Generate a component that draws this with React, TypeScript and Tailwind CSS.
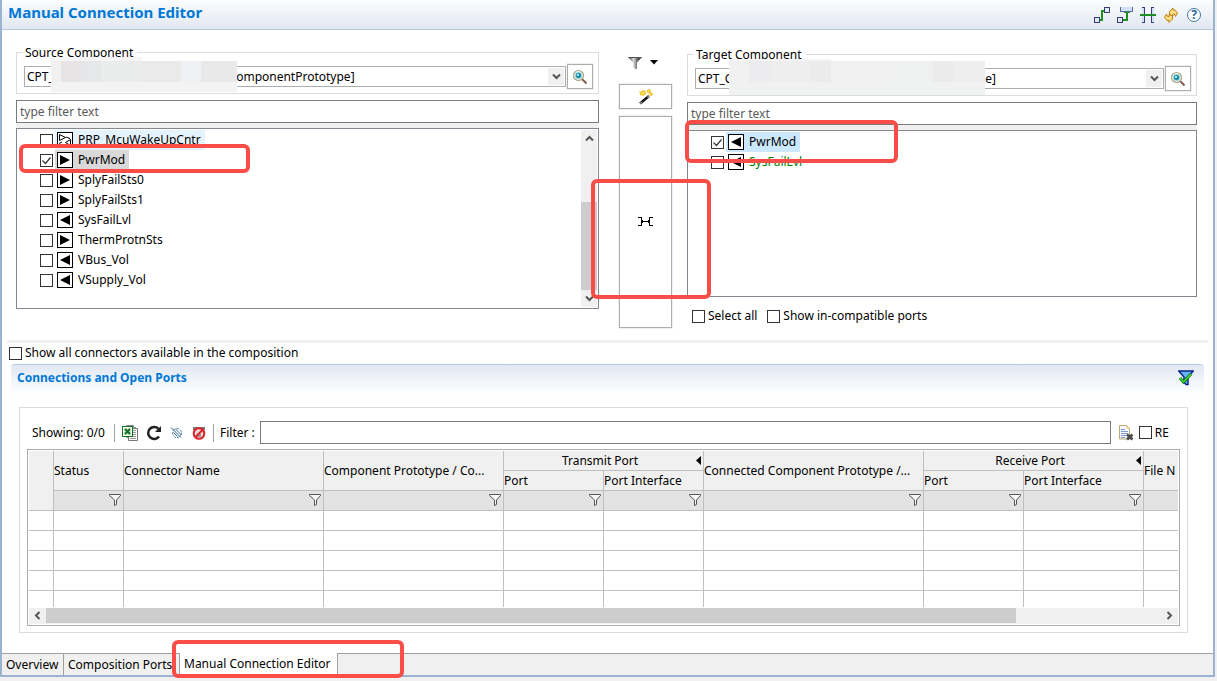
import { useState } from 'react'
import type { ReactNode } from 'react'

type Direction = 'in' | 'out' | 'both'

type Port = {
  name: string
  direction: Direction
  checked?: boolean
  highlight?: string
  color?: string
}

const sourcePorts: Port[] = [
  { name: 'PRP_McuWakeUpCntr', direction: 'both', highlight: 'bg-[#e5f3ff]' },
  { name: 'PwrMod', direction: 'out', checked: true, highlight: 'bg-[#d9d9d9]' },
  { name: 'SplyFailSts0', direction: 'out' },
  { name: 'SplyFailSts1', direction: 'out' },
  { name: 'SysFailLvl', direction: 'in' },
  { name: 'ThermProtnSts', direction: 'out' },
  { name: 'VBus_Vol', direction: 'in' },
  { name: 'VSupply_Vol', direction: 'in' },
]

const targetPorts: Port[] = [
  { name: 'PwrMod', direction: 'in', checked: true, highlight: 'bg-[#cce8ff]' },
  { name: 'SysFailLvl', direction: 'in', color: 'text-[#008000]' },
]

const tabs = [
  { name: 'Overview', width: 'min-w-[62px]' },
  { name: 'Composition Ports', width: 'min-w-[116px]' },
  { name: 'Manual Connection Editor', width: 'min-w-[158px]' },
]

const filterColumns = [
  'Status',
  'Connector Name',
  'Component Prototype',
  'Transmit Port',
  'Transmit Port Interface',
  'Connected Component Prototype',
  'Receive Port',
  'Receive Port Interface',
]

function PortIcon({ direction }: { direction: Direction }) {
  return (
    <svg width="16" height="16" viewBox="0 0 16 16" className="shrink-0">
      <rect x="0.5" y="0.5" width="15" height="15" fill="#fff" stroke="#000" />
      {direction === 'out' && <path d="M3 3v10l10-5z" />}
      {direction === 'in' && <path d="M13 3v10L3 8z" />}
      {direction === 'both' && (
        <g fill="none" stroke="#000">
          <path d="M2.5 2.5v6l6-3zM13.5 7.500v6l-5-3z" />
          <path d="M2 11.500l3-1.500M9 5l4 1.500M5 12.500h3" />
        </g>
      )}
    </svg>
  )
}

function LinkIcon() {
  return (
    <svg width="16" height="16" viewBox="0 0 16 16" shapeRendering="crispEdges">
      <path d="M6 13h2V4h3" fill="none" stroke="#1f8f1f" strokeWidth="2" />
      <rect x="10.500" y="0.500" width="5" height="5" fill="#dce9f7" stroke="#3b3b78" />
      <rect x="0.500" y="10.500" width="5" height="5" fill="#dce9f7" stroke="#3b3b78" />
    </svg>
  )
}

function DelegateIcon() {
  return (
    <svg width="16" height="16" viewBox="0 0 16 16" shapeRendering="crispEdges">
      <path d="M3.500 0v4.500h12V0" fill="#cfe2f7" stroke="#5a6590" />
      <path d="M6 13h4V5" fill="none" stroke="#1f8f1f" strokeWidth="2" />
      <path d="M7 5.500h6" stroke="#1f8f1f" />
      <rect x="0.500" y="10.500" width="5" height="5" fill="#dce9f7" stroke="#3b3b78" />
    </svg>
  )
}

function PassThroughIcon() {
  return (
    <svg width="16" height="16" viewBox="0 0 16 16" shapeRendering="crispEdges">
      <path d="M2 1h3v14H2zM11 1h3v14h-3z" fill="#cfe2f7" />
      <path d="M2 .5h2.500v15H2M14 .5h-2.500v15H14" fill="none" stroke="#3b3b78" />
      <path d="M0 8h16" stroke="#1f8f1f" strokeWidth="2" />
    </svg>
  )
}

function RefreshIcon() {
  return (
    <svg width="16" height="16" viewBox="0 0 16 16">
      <g fill="#ffdf80" stroke="#bd7f14">
        <path d="M6.500 7.500V4.500L10 1v2h2l2.500 3-2 3.500-1-2.500H10v2z" />
        <path d="M9.500 9v3L6 15.500v-2H4l-2.500-3L3.500 7l1 2.500H6v-2z" />
      </g>
    </svg>
  )
}

function HelpIcon() {
  return (
    <svg width="16" height="16" viewBox="0 0 16 16">
      <circle cx="8" cy="8" r="6.500" fill="#fff" stroke="#3a78a8" />
      <text
        x="8"
        y="12"
        textAnchor="middle"
        fill="#2c6697"
        className="font-['Noto_Sans',sans-serif] text-[12px] font-bold"
      >
        ?
      </text>
    </svg>
  )
}

function FunnelIcon() {
  return (
    <svg width="14" height="12" viewBox="0 0 14 12">
      <defs>
        <linearGradient id="funnel" x1="0" x2="1">
          <stop offset="0" stopColor="#222" />
          <stop offset="0.400" stopColor="#ddd" />
          <stop offset="0.700" stopColor="#555" />
          <stop offset="1" stopColor="#222" />
        </linearGradient>
      </defs>
      <path d="M0 0h14L9 5.500V12H7L5 10V5.500z" fill="url(#funnel)" />
      <path d="M.5.500h13" stroke="#555" />
    </svg>
  )
}

function ColumnFilterIcon() {
  return (
    <svg width="12" height="12" viewBox="0 0 12 12">
      <path d="M.5.500h11v1L7.500 6v4.500l-2 1V6l-5-4.500z" fill="#f6f6f6" stroke="#555" />
    </svg>
  )
}

function WandIcon() {
  return (
    <svg width="16" height="16" viewBox="0 0 16 16">
      <path d="M2 14.500 11 7" stroke="#111" strokeWidth="2.500" />
      <path d="M2 14.500 4 13M9.500 8.500 11 7" stroke="#999" strokeWidth="1.500" />
      <g fill="#ffd83d" stroke="#d9a400" strokeWidth="0.500">
        <path d="m5 1 1 1.500L7.500 2l-.5 1.500L8 5l-1.500.5L5 7 4 5.500 2 6l.5-1.500-1-1.500L3.500 3z" />
        <path d="M9 1.500 11.500 0l1 2-1 2-2-.5z" />
        <circle cx="13" cy="5" r="1.500" />
      </g>
    </svg>
  )
}

function SearchIcon() {
  return (
    <svg width="16" height="16" viewBox="0 0 16 16">
      <path d="m10 10 4.500 4.500" stroke="#855b50" strokeWidth="2" />
      <circle cx="6.500" cy="6.500" r="5" fill="#f3f6ee" stroke="#a9a586" strokeWidth="1.200" />
      <circle cx="6.500" cy="6.500" r="3.200" fill="#57bcd3" />
      <circle cx="6.500" cy="6.500" r="2.200" fill="#107c9c" />
      <path d="M5 5h2v2H5z" fill="#a9ecf7" />
    </svg>
  )
}

function ConnectIcon() {
  return (
    <svg width="16" height="10" viewBox="0 0 16 10" shapeRendering="crispEdges">
      <path
        d="M0 .5h3.500v8H0M15 .5h-3.500v8H15M4 4.500h7M4.500 3v3M10.500 3v3"
        fill="none"
        stroke="#000"
      />
    </svg>
  )
}

function ActiveFilterIcon() {
  return (
    <svg width="16" height="16" viewBox="0 0 16 16">
      <path d="M.8 1h14.400L10 7v7.500H8L6 12V7z" fill="#62b4f5" stroke="#0a1f8f" strokeWidth="1.400" />
      <path d="m2 8 3.500 4L13 4" fill="none" stroke="#0b6b0b" strokeWidth="3" />
      <path d="m2 8 3.500 4L13 4" fill="none" stroke="#4be03c" strokeWidth="1.500" />
    </svg>
  )
}

function ExcelIcon() {
  return (
    <svg width="16" height="16" viewBox="0 0 16 16">
      <path d="M4.500.500h7v2h2v10h-9z" fill="#fff" stroke="#888" />
      <path d="M6.500 3.500h9v12h-9z" fill="#fff" stroke="#777" />
      <path d="M11 5.500h3M11 7.500h3M11 9.500h3M8 11.500h6M8 13.500h6" stroke="#999" />
      <rect x="0.500" y="1.500" width="10" height="10" fill="#fff" stroke="#12731d" />
      <path d="M2 3h7v7H2z" fill="#d5ead6" />
      <path d="m3 4 5 5M8 4 3 9" stroke="#12731d" strokeWidth="2" />
    </svg>
  )
}

function ReloadIcon() {
  return (
    <svg width="16" height="16" viewBox="0 0 16 16">
      <path d="M12.500 3.800A6 6 0 1 0 13 11.500" fill="none" stroke="#222" strokeWidth="2.500" />
      <path d="M15 1v6H9z" fill="#222" />
    </svg>
  )
}

function StripedIcon() {
  return (
    <svg width="14" height="14" viewBox="0 0 14 14">
      <circle cx="7" cy="7" r="4.500" fill="#fff" stroke="#5f93ba" strokeDasharray="3 1" />
      <path d="m1 1.500 10 10M5.500 3l6 6M3.500 6.500l4 4" stroke="#2f6089" />
    </svg>
  )
}

function BlockedIcon() {
  return (
    <svg width="14" height="14" viewBox="0 0 14 14">
      <path d="M1 1h12v3H1z" fill="#777" />
      <circle cx="7" cy="7.500" r="5.300" fill="#e9dada" stroke="#e01f26" strokeWidth="2" />
      <path d="M5 8h4v3H5z" fill="#999" />
      <path d="m3.500 11 7-7" stroke="#e01f26" strokeWidth="2" />
    </svg>
  )
}

function ClearIcon() {
  return (
    <svg width="16" height="16" viewBox="0 0 16 16">
      <path d="M1.500.500h7l3 3v10.500h-10z" fill="#f5f8fc" stroke="#b9a76b" />
      <path d="M8.500.500v3h3z" fill="#e2c878" />
      <path d="M3 4.500h4M3 6.500h7M3 8.500h7M3 10.500h5M3 12.500h4" stroke="#7f9bc6" />
      <path d="m9 9.500 5.500 5M14.500 9.500 9 14.500" stroke="#4d4d4d" strokeWidth="2.800" />
    </svg>
  )
}

type ChevronProps = { direction: 'up' | 'down' | 'left' | 'right' }

function Chevron({ direction }: ChevronProps) {
  const paths = {
    up: 'M1 6.500 4.500 3 8 6.500',
    down: 'M1 2.500 4.500 6 8 2.500',
    left: 'M6.500 1 3 4.500 6.500 8',
    right: 'M2.500 1 6 4.500 2.500 8',
  }
  return (
    <svg width="9" height="9" viewBox="0 0 9 9">
      <path d={paths[direction]} fill="none" stroke="#555" strokeWidth="2" />
    </svg>
  )
}

type CheckboxProps = { label: ReactNode; defaultChecked?: boolean; className?: string }

function Checkbox({ label, defaultChecked, className = 'gap-[3px]' }: CheckboxProps) {
  return (
    <label className={`flex items-center ${className}`}>
      <span className="relative size-[13px] shrink-0">
        <input
          type="checkbox"
          defaultChecked={defaultChecked}
          className="peer block size-[13px] appearance-none border border-[#333] bg-white"
        />
        <svg
          width="13"
          height="13"
          viewBox="0 0 13 13"
          className="pointer-events-none absolute inset-0 hidden peer-checked:block"
        >
          <path d="m2.500 6.500 3 3 5-6" fill="none" stroke="#333" strokeWidth="1.200" />
        </svg>
      </span>
      {label}
    </label>
  )
}

function PortRow({ port }: { port: Port }) {
  return (
    <li className="flex h-5 pl-[22px]">
      <Checkbox
        defaultChecked={port.checked}
        className="gap-[2px]"
        label={
          <span
            className={`flex h-5 items-center gap-[5px] pr-1 pl-[2px] ${port.highlight ?? ''} ${port.color ?? ''}`}
          >
            <PortIcon direction={port.direction} />
            {port.name}
          </span>
        }
      />
    </li>
  )
}

type ComponentGroupProps = { label: string; value: string; children: ReactNode }

function ComponentGroup({ label, value, children }: ComponentGroupProps) {
  return (
    <div className="relative h-[42px] border border-[#dcdcdc] pt-[11px] pr-[5px] pl-[7px]">
      <span className="absolute -top-2 left-[6px] bg-white pr-1 pl-[2px] leading-4">{label}</span>
      <div className="flex gap-px">
        <div className="relative mt-[2px] h-[21px] flex-1">
          <select
            aria-label={label}
            className="h-[21px] w-full appearance-none border border-[#abadb3] bg-white pl-[2px]"
          >
            <option>{value}</option>
          </select>
          <span className="pointer-events-none absolute inset-y-[2px] right-[2px] flex w-4 items-center justify-center bg-[#f0f0f0]">
            <Chevron direction="down" />
          </span>
        </div>
        <button
          aria-label={`Search ${label}`}
          className="flex h-[25px] w-[26px] items-center justify-center border border-[#adadad] bg-white outline outline-[#f0f0f0]"
        >
          <SearchIcon />
        </button>
      </div>
      {children}
    </div>
  )
}

function FilterInput({ label }: { label: string }) {
  return (
    <input
      type="text"
      aria-label={label}
      placeholder="type filter text"
      className="mt-[6px] h-[23px] w-full border border-[#7a7a7a] bg-white px-[3px] placeholder-[#5a5a5a] outline-none"
    />
  )
}

function Marker({ className }: { className: string }) {
  return (
    <div
      className={`pointer-events-none absolute z-10 rounded-md border-4 border-[#fb4d47] ${className}`}
    />
  )
}

function GroupHead({ label }: { label: string }) {
  return (
    <span className="flex items-center">
      <span className="flex-1 text-center">{label}</span>
      <svg width="5" height="9" viewBox="0 0 5 9" className="mr-[2px]">
        <path d="M5 0v9L0 4.500z" />
      </svg>
    </span>
  )
}

function ConnectionsTable() {
  const head = 'border-r border-b border-[#bfbfbf] p-0 text-left font-normal truncate'
  return (
    <div className="border border-[#acacac] bg-white p-px">
      <div className="overflow-hidden">
        <table className="w-full table-fixed border-separate border-spacing-0 bg-white">
          <colgroup>
            <col className="w-[25px]" />
            <col className="w-[70px]" />
            <col className="w-[200px]" />
            <col className="w-[180px]" />
            <col className="w-[100px]" />
            <col className="w-[100px]" />
            <col className="w-[220px]" />
            <col className="w-[100px]" />
            <col className="w-[120px]" />
            <col />
          </colgroup>
          <thead className="bg-[#f0f0f0]">
            <tr className="h-5">
              <th rowSpan={3} className={head} />
              <th rowSpan={2} className={head}>Status</th>
              <th rowSpan={2} className={head}>Connector Name</th>
              <th rowSpan={2} className={head}>Component Prototype / Co...</th>
              <th colSpan={2} className={head}>
                <GroupHead label="Transmit Port" />
              </th>
              <th rowSpan={2} className={head}>Connected Component Prototype /...</th>
              <th colSpan={2} className={head}>
                <GroupHead label="Receive Port" />
              </th>
              <th
                rowSpan={2}
                className="border-b border-[#bfbfbf] p-0 text-left font-normal whitespace-nowrap"
              >
                File N
              </th>
            </tr>
            <tr className="h-5">
              <th className={head}>Port</th>
              <th className={head}>Port Interface</th>
              <th className={head}>Port</th>
              <th className={head}>Port Interface</th>
            </tr>
            <tr className="h-5 bg-[#e3e3e3]">
              {filterColumns.map((column) => (
                <th key={column} className="border-r border-b border-[#bfbfbf] p-0 pr-[2px] pb-[2px]">
                  <button aria-label={`Filter ${column}`} className="ml-auto block">
                    <ColumnFilterIcon />
                  </button>
                </th>
              ))}
              <th className="border-b border-[#bfbfbf] p-0" />
            </tr>
          </thead>
          <tbody>
            {[0, 1, 2, 3].map((row) => (
              <tr key={row} className="h-5">
                {[...filterColumns, 'File'].map((column) => (
                  <td key={column} className="border-r border-b border-[#bfbfbf] p-0" />
                ))}
                <td className="border-b border-[#bfbfbf] p-0" />
              </tr>
            ))}
            <tr className="h-4">
              {[...filterColumns, 'File'].map((column) => (
                <td key={column} className="border-r border-[#bfbfbf] p-0" />
              ))}
              <td className="p-0" />
            </tr>
          </tbody>
        </table>
      </div>
      <div className="mt-px flex h-4 items-start bg-[#f0f0f0]">
        <button aria-label="Scroll left" className="flex w-[17px] justify-center pt-[3px]">
          <Chevron direction="left" />
        </button>
        <div className="flex h-full flex-1">
          <div className="h-[15px] w-[87%] bg-[#cdcdcd]" />
        </div>
        <button aria-label="Scroll right" className="flex w-[17px] justify-center pt-[3px]">
          <Chevron direction="right" />
        </button>
      </div>
    </div>
  )
}

export default function App() {
  const [activeTab, setActiveTab] = useState('Manual Connection Editor')
  const pad = (count: number) => '\u00a0'.repeat(count)

  return (
    <div className="flex min-h-screen flex-col bg-[#f0f0f0] pr-[2px] pb-1 font-['Noto_Sans','Noto_Sans_CJK_SC',sans-serif] text-xs text-black">
      <div className="flex flex-1 flex-col border-x-2 border-b-2 border-[#99b4d1] bg-white">
        <header className="flex h-[30px] items-center justify-between border-b border-[#b4c6da] bg-gradient-to-b from-[#fcfdfe] to-[#e1e8f1] pr-[11px] pl-[6px]">
          <h1 className="mb-[6px] text-[15px] font-bold text-[#0078d7]">Manual Connection Editor</h1>
          <div className="flex gap-[7px]">
            <button aria-label="Connect ports"><LinkIcon /></button>
            <button aria-label="Delegate ports"><DelegateIcon /></button>
            <button aria-label="Pass through"><PassThroughIcon /></button>
            <button aria-label="Refresh"><RefreshIcon /></button>
            <button aria-label="Help"><HelpIcon /></button>
          </div>
        </header>

        <main className="flex flex-1 flex-col">
          <div className="grid grid-cols-[minmax(0,583fr)_88px_minmax(0,510fr)] pt-[22px] pr-4 pl-[14px]">
            <section className="relative">
              <ComponentGroup
                label="Source Component"
                value={`CPT_${pad(56)}ComponentPrototype]`}
              >
                <div className="pointer-events-none absolute top-1 left-[34px] h-[35px] w-[186px]">
                  <div className="h-1 w-[91px] bg-[#f5f5f5]" />
                  <div className="flex h-[21px] bg-[#f1f1f1] pl-[10px]">
                    <div className="w-5 bg-[#e6e4e5]" />
                    <div className="w-5 bg-[#e5e7e9]" />
                    <div className="w-10 bg-[#eaecec]" />
                    <div className="w-10 bg-[#e9eae9]" />
                    <div className="w-5 bg-[#f0f1f4]" />
                    <div className="flex-1 bg-[#e9e9e9]" />
                  </div>
                  <div className="h-[10px] bg-[#f3f3f3]" />
                </div>
              </ComponentGroup>
              <FilterInput label="Filter source ports" />
              <div className="h-[5px] bg-[#f0f0f0]" />
              <div className="flex h-[181px] border border-[#828790] p-px">
                <ul className="flex-1">
                  {sourcePorts.map((port) => (
                    <PortRow key={port.name} port={port} />
                  ))}
                </ul>
                <div className="flex w-4 flex-col items-center bg-[#f0f0f0]">
                  <button aria-label="Scroll up" className="flex h-[17px] items-center">
                    <Chevron direction="up" />
                  </button>
                  <div className="flex w-full flex-1 flex-col justify-end">
                    <div className="h-[88px] bg-[#cdcdcd]" />
                  </div>
                  <button aria-label="Scroll down" className="flex h-[17px] items-center">
                    <Chevron direction="down" />
                  </button>
                </div>
              </div>
              <Marker className="top-[92px] left-[3px] h-[29px] w-[231px]" />
            </section>

            <section className="relative flex flex-col pt-[5px] pr-[15px] pl-5">
              <div className="flex h-[27px] items-start gap-2 pl-[9px]">
                <button aria-label="Filter"><FunnelIcon /></button>
                <button aria-label="Filter options" className="pt-[3px]">
                  <svg width="8" height="5" viewBox="0 0 8 5">
                    <path d="M0 0h8L4 4.500z" />
                  </svg>
                </button>
              </div>
              <button
                aria-label="Auto connect"
                className="flex h-[25px] items-center justify-center border border-[#adadad] outline outline-[#f0f0f0]"
              >
                <WandIcon />
              </button>
              <button
                aria-label="Connect"
                className="mt-[7px] flex h-[212px] items-center justify-center border border-[#adadad] outline outline-[#f0f0f0]"
              >
                <ConnectIcon />
              </button>
              <Marker className="top-[127px] -left-2 h-[120px] w-[120px]" />
            </section>

            <section className="relative pt-[2px]">
              <ComponentGroup label="Target Component" value={`CPT_C${pad(81)}e]`}>
                <div className="pointer-events-none absolute top-1 left-[41px] h-9 w-[256px]">
                  <div className="h-[2px] w-[102px] bg-[#f5f5f5]" />
                  <div className="flex h-[21px] bg-[#f1f1f1] pl-5">
                    <div className="w-[22px] bg-[#ececee]" />
                    <div className="w-10 bg-[#eeeeee]" />
                    <div className="w-5 bg-[#ebebec]" />
                    <div className="w-[60px] bg-[#f0f0f0]" />
                    <div className="w-[42px] bg-[#eff0f0]" />
                    <div className="w-5 bg-[#ebebec]" />
                    <div className="flex-1 bg-[#eeeeef]" />
                  </div>
                  <div className="h-[13px] bg-[#f0f1f1]" />
                </div>
              </ComponentGroup>
              <FilterInput label="Filter target ports" />
              <div className="h-[5px] bg-[#f0f0f0]" />
              <ul className="h-[167px] border border-[#828790] p-px">
                {targetPorts.map((port) => (
                  <PortRow key={port.name} port={port} />
                ))}
              </ul>
              <div className="flex gap-[10px] pt-[11px] pl-[5px]">
                <Checkbox label="Select all" />
                <Checkbox label="Show in-compatible ports" />
              </div>
              <Marker className="top-[68px] -left-[2px] h-[43px] w-[213px]" />
            </section>
          </div>

          <div className="mx-[5px] mt-3 h-[3px] bg-[#f0f0f0]" />
          <div className="flex pt-[2px] pl-[7px]">
            <Checkbox label="Show all connectors available in the composition" />
          </div>

          <section className="mx-[9px] mt-[3px] rounded-t-sm border-t border-[#b4c9e0]">
            <div className="flex h-[30px] items-start justify-between bg-gradient-to-b from-[#e1e8f3] to-white pt-[5px] pr-[10px] pl-[6px]">
              <h2 className="font-bold text-[#0078d7]">Connections and Open Ports</h2>
              <button aria-label="Filter connections"><ActiveFilterIcon /></button>
            </div>
          </section>

          <section className="mt-3 mr-[25px] ml-[17px] border border-[#dcdcdc] p-[7px] pt-[13px] pb-[6px]">
            <div className="mb-[5px] flex h-[23px] items-center pr-[11px] pl-[5px]">
              <span className="w-[82px] whitespace-nowrap">Showing: 0/0</span>
              <span className="h-[18px] w-px bg-[#a0a0a0]" />
              <div className="flex w-[98px] items-center gap-2 pl-[7px]">
                <button aria-label="Export to Excel"><ExcelIcon /></button>
                <button aria-label="Reload"><ReloadIcon /></button>
                <button aria-label="Clear highlighting"><StripedIcon /></button>
                <button aria-label="Disable filter"><BlockedIcon /></button>
              </div>
              <span className="h-[18px] w-px bg-[#a0a0a0]" />
              <label htmlFor="connection-filter" className="w-[46px] pl-[6px] whitespace-nowrap">
                Filter :
              </label>
              <input
                id="connection-filter"
                type="text"
                className="h-[23px] min-w-0 flex-1 border border-[#7a7a7a] bg-white px-1 outline-none"
              />
              <button aria-label="Clear filter" className="mr-[5px] ml-[7px]"><ClearIcon /></button>
              <Checkbox label="RE" />
            </div>
            <ConnectionsTable />
          </section>
        </main>

        <nav className="relative mt-5 flex h-[22px] border-t border-[#a0a0a0] bg-[#f0f0f0]">
          {tabs.map((tab) => (
            <button
              key={tab.name}
              onClick={() => setActiveTab(tab.name)}
              className={`border-r border-[#a0a0a0] px-1 text-left whitespace-nowrap ${tab.width} ${tab.name === activeTab ? '-mt-px bg-white' : ''}`}
            >
              {tab.name}
            </button>
          ))}
          <Marker className="-top-[14px] left-[170px] h-[38px] w-[232px]" />
        </nav>
      </div>
    </div>
  )
}
